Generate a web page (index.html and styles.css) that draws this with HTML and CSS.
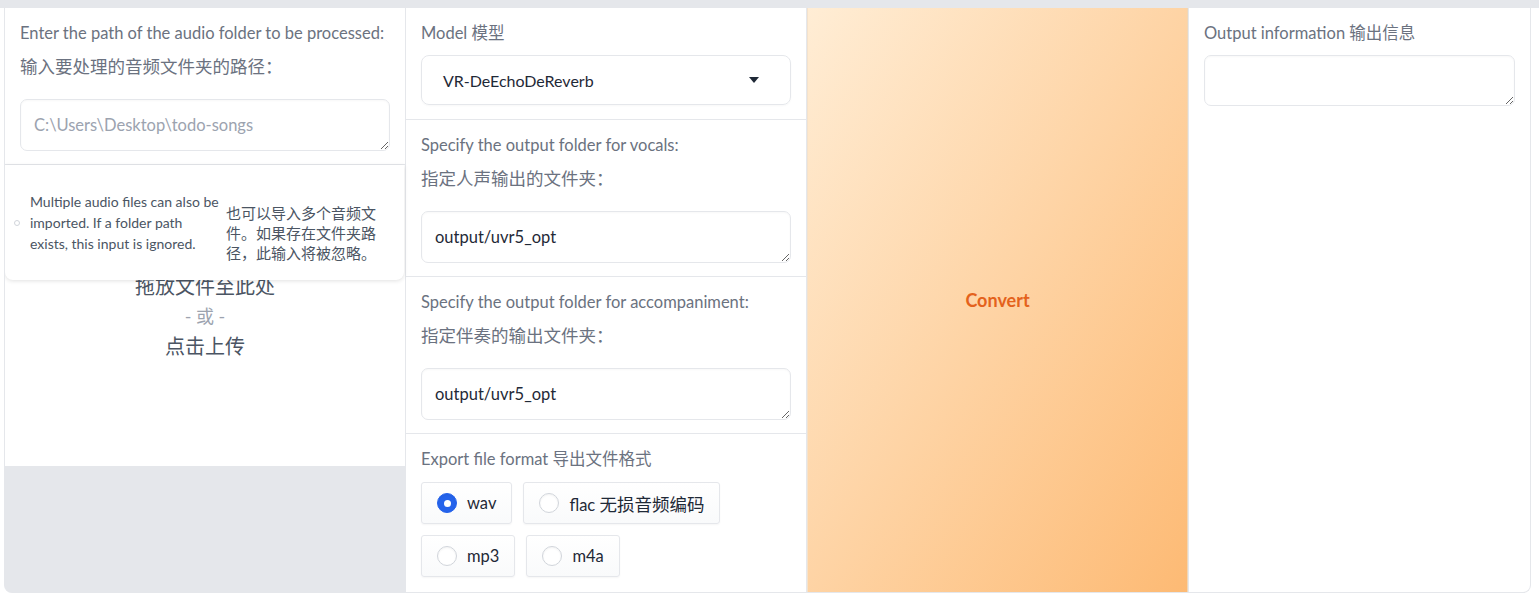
FILE: index.html
```html
<!DOCTYPE html>
<html lang="zh">
<head>
<meta charset="utf-8">
<title>UVR5</title>
<link rel="stylesheet" href="styles.css">
</head>
<body>
<div class="topstrip"></div>
<div class="row">
  <div class="col col-input">
    <div class="block">
      <div class="lbl">Enter the path of the audio folder to be processed:</div>
      <div class="lbl zh">输入要处理的音频文件夹的路径：</div>
      <textarea class="tb" rows="1" placeholder="C:\Users\Desktop\todo-songs" spellcheck="false"></textarea>
    </div>
    <div class="block upload">
      <div class="drop">
        <div class="drop-main">拖放文件至此处</div>
        <div class="drop-or">- 或 -</div>
        <div class="drop-main">点击上传</div>
      </div>
      <div class="tip">
        <span class="tip-dot"></span>
        <div class="tip-en">Multiple audio files can also be<br>imported. If a folder path<br>exists, this input is ignored.</div>
        <div class="tip-zh">也可以导入多个音频文<br>件。如果存在文件夹路<br>径，此输入将被忽略。</div>
      </div>
    </div>
  </div>

  <div class="col col-opts">
    <div class="block b-model">
      <div class="lbl">Model 模型</div>
      <div class="dropdown">
        <span>VR-DeEchoDeReverb</span>
        <span class="caret"></span>
      </div>
    </div>
    <div class="block">
      <div class="lbl">Specify the output folder for vocals:</div>
      <div class="lbl zh">指定人声输出的文件夹：</div>
      <textarea class="tb" rows="1" spellcheck="false">output/uvr5_opt</textarea>
    </div>
    <div class="block">
      <div class="lbl">Specify the output folder for accompaniment:</div>
      <div class="lbl zh">指定伴奏的输出文件夹：</div>
      <textarea class="tb" rows="1" spellcheck="false">output/uvr5_opt</textarea>
    </div>
    <div class="block b-format">
      <div class="lbl">Export file format 导出文件格式</div>
      <div class="radios">
        <label class="radio"><span class="circle on"></span><span>wav</span></label>
        <label class="radio"><span class="circle"></span><span>flac <span class="zhtxt">无损音频编码</span></span></label>
        <label class="radio"><span class="circle"></span><span>mp3</span></label>
        <label class="radio"><span class="circle"></span><span>m4a</span></label>
      </div>
    </div>
  </div>

  <div class="col col-btn">
    <button class="convert">Convert</button>
  </div>

  <div class="col col-out">
    <div class="block b-out">
      <div class="lbl">Output information 输出信息</div>
      <textarea class="tb" rows="1" spellcheck="false"></textarea>
    </div>
  </div>
</div>
</body>
</html>
```
FILE: styles.css
```css
html, body {
  margin: 0;
  padding: 0;
  background: #ffffff;
  overflow: hidden;
}
body {
  font-family: Lato, "Noto Sans CJK SC", sans-serif;
  color: #1f2937;
}
.topstrip {
  height: 8px;
  background: #e5e7eb;
}
.row {
  display: flex;
  gap: 1px;
  width: 1525px;
  height: 584px;
  margin-left: 4px;
  background: #e5e7eb;
  border: 1px solid #e5e7eb;
  border-top: 0;
  border-radius: 0 0 8px 8px;
  overflow: hidden;
}
.col {
  display: flex;
  flex-direction: column;
  gap: 1px;
  flex: none;
}
.col-input { width: 400px; }
.col-opts { width: 400px; }
.col-btn { width: 381px; }
.col-out { width: 341px; }

.block {
  background: #ffffff;
  padding: 13px 15px 13px 15px;
}
.lbl {
  font-size: 16.5px;
  line-height: 24px;
  color: #6b7280;
  white-space: nowrap;
}
.lbl.zh {
  margin-top: 10px;
  font-size: 17.5px;
}
.tb {
  display: block;
  box-sizing: border-box;
  width: 100%;
  height: 52px;
  margin-top: 20px;
  padding: 13px 13px;
  border: 1px solid #e5e7eb;
  border-radius: 7px;
  font-family: Lato, "Noto Sans CJK SC", sans-serif;
  font-size: 16.5px;
  line-height: 24px;
  color: #1f2937;
  background: #ffffff;
  box-shadow: inset 0 1px 2px rgba(0, 0, 0, 0.03);
  outline: none;
  resize: vertical;
  overflow: hidden;
}
.tb::placeholder {
  color: #9ca3af;
}

/* upload */
.upload {
  position: relative;
  height: 301px;
  box-sizing: border-box;
  padding: 0;
  display: flex;
  align-items: center;
  justify-content: center;
}
.drop {
  display: flex;
  flex-direction: column;
  align-items: center;
}
.drop-main {
  font-size: 20px;
  line-height: 30px;
  color: #4b5563;
}
.drop-or {
  font-size: 18px;
  line-height: 30px;
  color: #9ca3af;
}
.tip {
  position: absolute;
  top: 0;
  left: 0;
  right: 1px;
  height: 115px;
  display: flex;
  align-items: center;
  padding-left: 9px;
  background: #ffffff;
  border-radius: 0 0 8px 8px;
  box-shadow: 0 1px 4px rgba(0, 0, 0, 0.12);
  color: #4b5563;
}
.tip-dot {
  flex: none;
  width: 4px;
  height: 4px;
  border: 1px solid #d1d5db;
  border-radius: 50%;
  margin-right: 10px;
}
.tip-en {
  flex: none;
  width: 196px;
  font-size: 14px;
  line-height: 21px;
  white-space: nowrap;
}
.tip-zh {
  flex: none;
  font-size: 15px;
  line-height: 20px;
  padding-top: 21px;
  white-space: nowrap;
}

/* model */
.b-model .dropdown {
  margin-top: 10px;
  box-sizing: border-box;
  height: 50px;
  display: flex;
  align-items: center;
  justify-content: space-between;
  padding: 0 31px 0 21px;
  border: 1px solid #e5e7eb;
  border-radius: 8px;
  font-size: 16px;
  color: #1f2937;
  box-shadow: 0 1px 2px rgba(0, 0, 0, 0.03);
}
.caret {
  width: 0;
  height: 0;
  border-left: 5px solid transparent;
  border-right: 5px solid transparent;
  border-top: 6px solid #1f2937;
}
.b-model { padding-bottom: 14px; }

/* format */
.b-format { flex: 1; }
.radios {
  display: flex;
  flex-wrap: wrap;
  gap: 11px;
  margin-top: 11px;
}
.radio {
  display: inline-flex;
  align-items: center;
  gap: 10px;
  box-sizing: border-box;
  height: 42px;
  padding: 0 15px;
  border: 1px solid #e5e7eb;
  border-radius: 3px;
  background: linear-gradient(#ffffff, #f9fafb);
  box-shadow: 0 1px 2px rgba(0, 0, 0, 0.04);
  font-size: 16.5px;
  color: #1f2937;
}
.zhtxt {
  font-size: 17.5px;
}
.circle {
  position: relative;
  box-sizing: border-box;
  width: 20px;
  height: 20px;
  border-radius: 50%;
  border: 1px solid #d1d5db;
  background: #ffffff;
  box-shadow: inset 0 1px 2px rgba(0, 0, 0, 0.05);
}
.circle.on {
  background: #2563eb;
  border-color: #2563eb;
}
.circle.on::after {
  content: "";
  position: absolute;
  left: 50%;
  top: 50%;
  width: 7px;
  height: 7px;
  margin: -3.5px 0 0 -3.5px;
  border-radius: 50%;
  background: #ffffff;
}

/* button */
.convert {
  flex: 1;
  border: 0;
  border-left: 1px solid #f3e2cd;
  border-right: 1px solid #f0d6b5;
  margin: 0;
  background: linear-gradient(to bottom right, #ffedd5, #fdba74);
  color: #e4621c;
  font-family: Lato, sans-serif;
  font-weight: 700;
  font-size: 18px;
}

/* output */
.b-out {
  flex: 1;
}
.b-out .tb {
  margin-top: 10px;
  height: 51px;
}
```
